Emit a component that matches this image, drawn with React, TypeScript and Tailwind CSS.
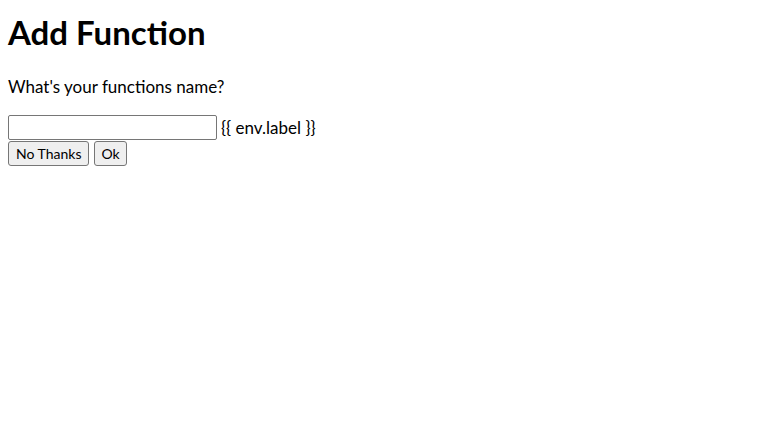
export default function App() {
  return (
    <div className="min-h-[441px] bg-white p-2 text-black">
      <div className="font-['Lato',sans-serif]">
        <h1 className="mt-1 mb-[25px] text-[33px] font-bold leading-[40px]">Add Function</h1>
        <p className="mb-[18px] text-[17px] leading-[20px]">What's your functions name?</p>
        <div className="flex items-center">
          <input
            type="text"
            className="h-[25px] w-[209px] rounded-[2px] border border-[#767676] bg-white px-0.5 text-[13px]"
          />
          <span className="ml-1 text-[17px] leading-[20px]">{"{{ env.label }}"}</span>
        </div>
        <div className="mt-[1px] flex gap-[5px]">
          <button className="h-[25px] rounded-[3px] border border-[#767676] bg-[#efefef] px-[7px] text-[14px] leading-none">
            No Thanks
          </button>
          <button className="h-[25px] rounded-[3px] border border-[#767676] bg-[#efefef] px-[6px] text-[14px] leading-none">
            Ok
          </button>
        </div>
      </div>
    </div>
  );
}
